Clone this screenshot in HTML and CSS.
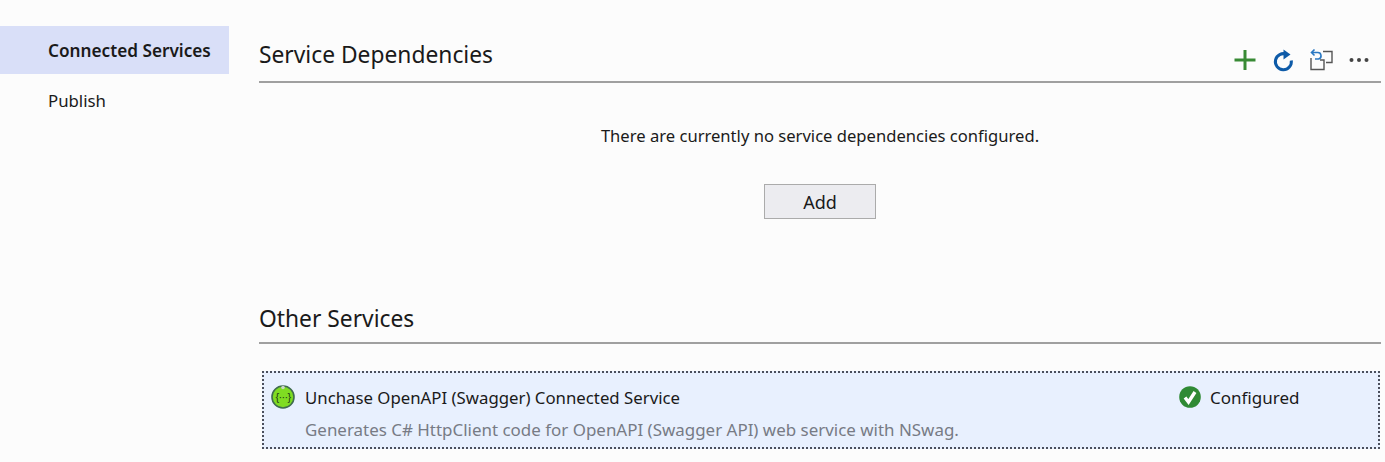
FILE: index.html
```html
<!DOCTYPE html>
<html lang="en">
<head>
<meta charset="utf-8">
<title>Connected Services</title>
<link rel="stylesheet" href="styles.css">
</head>
<body>
<div class="page">
  <nav class="sidebar">
    <div class="nav-item active">Connected Services</div>
    <div class="nav-item">Publish</div>
  </nav>
  <main class="main">
    <header class="section-head first">
      <h2 class="section-title">Service Dependencies</h2>
      <div class="toolbar">
        <svg class="tool" width="24" height="24" viewBox="0 0 24 24"><path d="M12 2v20M1.500 12h21" stroke="#388a34" stroke-width="3" fill="none"/></svg>
        <svg class="tool" width="24" height="24" viewBox="0 0 24 24"><path d="M15.500 6.300A8 8 0 1 0 20.300 12.500" stroke="#0e5ba8" stroke-width="3" fill="none"/><path d="M12.500 1.500v10l7-5z" fill="#0e5ba8"/></svg>
        <svg class="tool" width="24" height="24" viewBox="0 0 24 24"><path d="M14 3.500h9v11h-6" stroke="#555" stroke-width="1.400" fill="none"/><path d="M2 10v11.500h13V12h-4" stroke="#555" stroke-width="1.400" fill="none"/><path d="M5.500 1.500L2.500 4.500L5.500 7.500M2.500 4.500h6a3.300 3.300 0 0 1 1 6.500H6" stroke="#2a78c2" stroke-width="1.600" fill="none"/></svg>
        <svg class="tool" width="24" height="24" viewBox="0 0 24 24"><circle cx="4.500" cy="12" r="2" fill="#444"/><circle cx="12" cy="12" r="2" fill="#444"/><circle cx="19.500" cy="12" r="2" fill="#444"/></svg>
      </div>
    </header>
    <section class="empty">
      <p class="empty-text">There are currently no service dependencies configured.</p>
      <button class="add-btn">Add</button>
    </section>
    <header class="section-head second">
      <h2 class="section-title">Other Services</h2>
    </header>
    <article class="card">
      <div class="card-row">
        <svg class="swagger" width="24" height="24" viewBox="0 0 24 24"><circle cx="12" cy="12" r="11" fill="#7fdc22" stroke="#3f6b4f" stroke-width="1.600"/><circle cx="12" cy="2.500" r="1.800" fill="#c9d6c4"/><text x="12" y="16" text-anchor="middle" class="swagger-text">{···}</text></svg>
        <span class="card-name">Unchase OpenAPI (Swagger) Connected Service</span>
        <span class="status">
          <svg width="22" height="22" viewBox="0 0 22 22"><circle cx="11" cy="11" r="10.800" fill="#2f8a34"/><path d="M6 11.500l3.500 4.500 6.500-10" stroke="#fff" stroke-width="3.400" fill="none"/></svg>
          <span>Configured</span>
        </span>
      </div>
      <p class="card-desc">Generates C# HttpClient code for OpenAPI (Swagger API) web service with NSwag.</p>
    </article>
  </main>
</div>
</body>
</html>
```
FILE: styles.css
```css
* { box-sizing: border-box; }
html, body { margin: 0; height: 100%; }
body {
  background: #fcfcfc;
  color: #1a1a1a;
  font-family: "Noto Sans", "Open Sans", sans-serif;
  overflow: hidden;
}
.page { display: flex; height: 462px; }
.sidebar { width: 229px; flex: none; padding-top: 26px; }
.nav-item {
  height: 48px;
  padding: 0 0 2px 48px;
  display: flex;
  align-items: center;
  font-size: 16.800px;
  margin-bottom: 3px;
}
.nav-item.active { background: #d9dff8; font-weight: 600; font-size: 17.200px; padding-bottom: 0; }
.main { flex: none; width: 1122px; margin-left: 30px; }
.section-head {
  display: flex;
  align-items: center;
  justify-content: space-between;
  border-bottom: 2px solid #a0a0a0;
}
.section-head.first { margin-top: 36px; height: 47px; padding-bottom: 8px; }
.section-head.second { margin-top: 0; height: 47px; padding-bottom: 3px; }
.section-title { margin: 0; font-size: 22.800px; font-weight: 400; }
.toolbar { display: flex; gap: 14px; margin-top: 11px; margin-right: 10px; }
.tool { display: block; }
.empty {
  height: 214px;
  display: flex;
  flex-direction: column;
  align-items: center;
}
.empty-text { margin: 39px 0 0; font-size: 16.600px; line-height: 28px; }
.add-btn {
  margin-top: 34px;
  width: 112px;
  height: 35px;
  border: 1px solid #ababab;
  background: #ececf0;
  color: #1a1a1a;
  font: 18px "Noto Sans", sans-serif;
  padding: 0;
}
.card {
  margin: 27px 1px 0 3px;
  height: 78px;
  background: #e8f0fe;
  border: 2px dotted #4a4f5c;
  padding: 12px 0 0 7px;
}
.card-row { display: flex; align-items: center; }
.swagger { margin-right: 10px; flex: none; }
.swagger-text { font: 400 11px "Liberation Sans", sans-serif; letter-spacing: -0.700px; fill: #1d3a18; }
.card-name { font-size: 16.800px; flex: 1; }
.status { display: flex; align-items: center; gap: 9px; font-size: 17px; width: 199px; }
.card-desc { margin: 9px 0 0 34px; font-size: 16.950px; color: #777b85; }
```
